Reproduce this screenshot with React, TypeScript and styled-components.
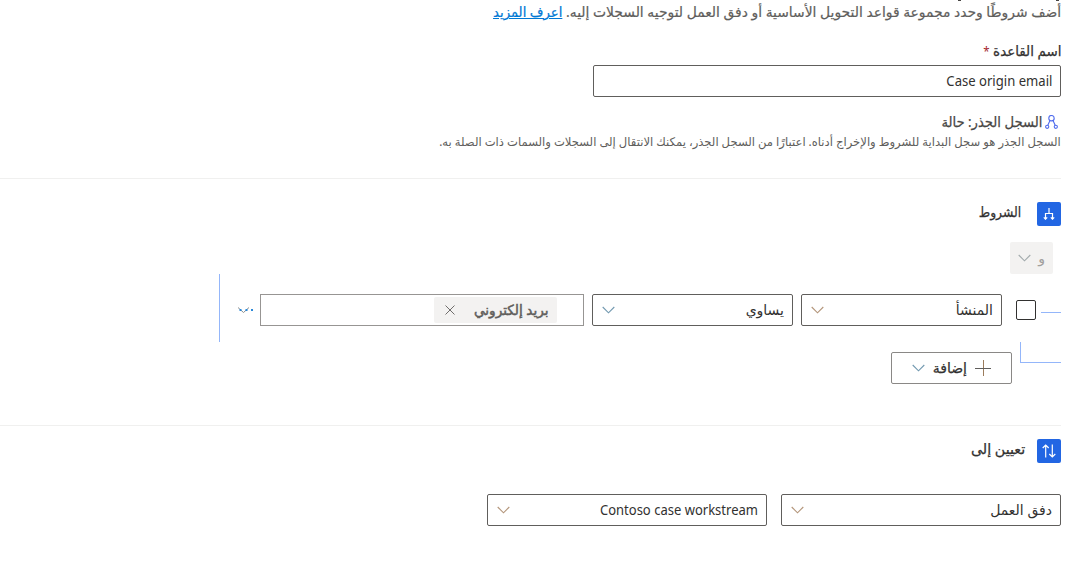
import React from 'react';
import styled, { createGlobalStyle } from 'styled-components';

const Global = createGlobalStyle`
  * { box-sizing: border-box; }
  body { margin: 0; background: #fff; overflow: hidden; }
`;

const Page = styled.main`
  direction: rtl;
  width: 1076px;
  height: 569px;
  overflow: hidden;
  padding-right: 15px;
  display: flex;
  flex-direction: column;
  color: #323130;
  font-family: "Noto Sans", "DejaVu Sans", sans-serif;
  font-size: 14px;
  line-height: 20px;
  white-space: nowrap;
`;

const Fit = styled.span<{ $size?: number; $x?: number; $heavy?: number }>`
  display: inline-block;
  font-size: ${(p) => p.$size ?? 14}px;
  transform: scaleX(${(p) => p.$x ?? 1});
  transform-origin: right center;
  -webkit-text-stroke: ${(p) => p.$heavy ?? 0}px currentColor;
`;

const HeadingTail = styled.svg`
  display: block;
  flex: none;
  margin: 0;
`;

const Intro = styled.p`
  margin: 0;
  height: 20px;
  color: #605e5c;
`;

const Link = styled(Fit)`
  margin-right: -5px;
  color: #0078d4;
  text-decoration: underline;
`;

const Label = styled.label`
  margin-top: 19px;
  height: 24px;
`;

const Star = styled.span`
  color: #a4262c;
  font-size: 12px;
  -webkit-text-stroke: 0;
`;

const Input = styled.div`
  width: 468px;
  height: 32px;
  padding: 0 8px;
  border: 1px solid #605e5c;
  border-radius: 2px;
  line-height: 30px;
`;

const RootTitle = styled.div`
  display: flex;
  align-items: center;
  gap: 3px;
  height: 20px;
  margin-top: 15px;
  padding-right: 3px;
  color: #484644;
`;

const RootNote = styled.p`
  margin: 1px 0 27px;
  height: 18px;
  line-height: 16px;
  color: #605e5c;
`;

const Rule = styled.hr<{ $top?: number }>`
  width: 100%;
  height: 1px;
  margin: ${(p) => p.$top ?? 0}px 0 0;
  border: 0;
  background: #f0f0ef;
`;

const SectionHead = styled.div<{ $top: number; $gap: number }>`
  display: flex;
  align-items: center;
  gap: ${(p) => p.$gap}px;
  height: 24px;
  margin-top: ${(p) => p.$top}px;
`;

const SectionTitle = styled.span`
  padding-bottom: 4px;
`;

const Badge = styled.span`
  display: grid;
  place-items: center;
  width: 24px;
  height: 24px;
  border-radius: 2px;
  background: #2266e3;
`;

const AndButton = styled.button`
  display: flex;
  align-items: center;
  justify-content: space-between;
  width: 43px;
  height: 32px;
  margin: 16px 8px 0 0;
  padding: 0 8px;
  border: 0;
  border-radius: 2px;
  background: #f3f2f1;
  color: #a19f9d;
  font: inherit;
`;

const Row = styled.div`
  display: flex;
  height: 68px;
  align-items: center;
  padding-top: 4px;
`;

const Connector = styled.span`
  width: 20px;
  height: 1px;
  margin: 5px 0 0 5px;
  background: #94b6fa;
`;

const Check = styled.span`
  width: 20px;
  height: 20px;
  margin-left: 14px;
  border: 1px solid #323130;
  border-radius: 2px;
`;

const Select = styled.div<{ $w: number; $gap?: number }>`
  display: flex;
  align-items: center;
  justify-content: space-between;
  width: ${(p) => p.$w}px;
  height: 32px;
  margin-left: ${(p) => p.$gap ?? 0}px;
  padding: 0 8px 0 9px;
  border: 1px solid #605e5c;
  border-radius: 2px;
`;

const TagBox = styled.div`
  display: flex;
  align-items: center;
  width: 324px;
  height: 32px;
  padding-right: 26px;
  border: 1px solid #979593;
`;

const Tag = styled.span`
  display: flex;
  align-items: center;
  justify-content: space-between;
  width: 123px;
  height: 26px;
  padding: 0 8px 0 11px;
  border-radius: 2px;
  background: #f3f2f1;
  color: #605e5c;
`;

const More = styled.span`
  display: flex;
  margin-right: 7px;
`;

const GroupEdge = styled.span`
  width: 1px;
  height: 68px;
  margin: -4px 17px 0 0;
  background: #94b6fa;
`;

const AddRow = styled.div`
  display: flex;
  height: 42px;
`;

const Elbow = styled.span`
  width: 41px;
  height: 21px;
  margin-left: 8px;
  border: solid #94b6fa;
  border-width: 0 0 1px 1px;
`;

const AddButton = styled.button`
  display: flex;
  align-items: center;
  width: 121px;
  height: 32px;
  margin-top: 10px;
  padding: 0 20px;
  border: 1px solid #8a8886;
  border-radius: 2px;
  background: #fff;
  color: #323130;
  font: inherit;
`;

const AddText = styled.span`
  margin: 0 8px 0 auto;
`;

const Targets = styled.div`
  display: flex;
  margin-top: 31px;
`;

const TAN = '#b3957a';
const BLUE = '#7299b0';

const Chevron = ({ color = TAN }: { color?: string }) => (
  <svg width="13" height="8" viewBox="0 0 13 8" fill="none" stroke={color} strokeWidth="1.1">
    <path d="M.7 1 6.5 6.800 12.300 1" />
  </svg>
);

const RootIcon = () => (
  <svg width="13" height="14" viewBox="0 0 13 14" fill="none" stroke="#4f6bed" strokeWidth="1.1">
    <circle cx="6.5" cy="3.200" r="2.700" />
    <circle cx="2.200" cy="11.800" r="1.600" />
    <circle cx="10.800" cy="11.800" r="1.600" />
    <path d="M5 5.500 2.800 10.300M8 5.500l2.200 4.800" />
  </svg>
);

const BranchIcon = () => (
  <svg width="12" height="12" viewBox="0 0 12 12" fill="none" stroke="#fff" strokeWidth="1.2">
    <path d="M6 0v5.500M2.500 11V5.500h7V11M.8 9.300l1.700 1.900 1.700-1.900M7.800 9.300l1.700 1.900 1.700-1.900" />
  </svg>
);

const SwapIcon = () => (
  <svg width="14" height="14" viewBox="0 0 14 14" fill="none" stroke="#fff" strokeWidth="1.2">
    <path d="M3.700 13.500V1M.7 4l3-3 3 3M10.300.5V13M7.300 10l3 3 3-3" />
  </svg>
);

export default function App() {
  return (
    <>
      <Global />
      <Page>
        <HeadingTail width="104" height="2" viewBox="0 0 104 2" fill="none" stroke="#484644">
          <path d="M1 .5h3M99 .5h3" />
        </HeadingTail>
        <Intro>
          <Fit $x={0.99} $heavy={0.2}>
            أضف شروطًا وحدد مجموعة قواعد التحويل الأساسية أو دفق العمل لتوجيه السجلات إليه.
          </Fit>{' '}
          <Link as="a" $x={0.945} $heavy={0.2}>اعرف المزيد</Link>
        </Intro>
        <Label>
          <Fit $x={0.96} $heavy={0.25}>اسم القاعدة <Star>*</Star></Fit>
        </Label>
        <Input><Fit $x={0.935}>Case origin email</Fit></Input>
        <RootTitle>
          <RootIcon />
          <Fit $x={0.94} $heavy={0.25}>السجل الجذر: حالة</Fit>
        </RootTitle>
        <RootNote>
          <Fit $size={12} $x={0.967}>
            السجل الجذر هو سجل البداية للشروط والإخراج أدناه. اعتبارًا من السجل الجذر، يمكنك الانتقال إلى السجلات والسمات ذات الصلة به.
          </Fit>
        </RootNote>
        <Rule />
        <SectionHead $top={23} $gap={16}>
          <Badge><BranchIcon /></Badge>
          <SectionTitle><Fit $x={0.88} $heavy={0.25}>الشروط</Fit></SectionTitle>
        </SectionHead>
        <AndButton><Fit>و</Fit><Chevron color="#a3abad" /></AndButton>
        <Row>
          <Connector />
          <Check />
          <Select $w={201} $gap={8}><Fit>المنشأ</Fit><Chevron /></Select>
          <Select $w={201} $gap={8}><Fit>يساوي</Fit><Chevron color={BLUE} /></Select>
          <TagBox>
            <Tag>
              <Fit $x={0.975} $heavy={0.5}>بريد إلكتروني</Fit>
              <svg width="10" height="10" viewBox="0 0 10 10" stroke="#605e5c" strokeWidth=".9">
                <path d="M.5.5l9 9M9.500.5l-9 9" />
              </svg>
            </Tag>
          </TagBox>
          <More>
            <svg width="16" height="8" viewBox="0 0 16 8" fill="none">
              <path d="M1 1.500 6.500 6.500 12 1.500" stroke="#8b8f90" />
              <path d="M2.500 4h2M8.500 4h2M14 4h2" stroke="#2b88d8" strokeWidth="2" />
            </svg>
          </More>
          <GroupEdge />
        </Row>
        <AddRow>
          <Elbow />
          <AddButton>
            <svg width="16" height="16" viewBox="0 0 16 16">
              <path d="M8.500 0v16" stroke="#9b7c5c" />
              <path d="M0 8.500h16" stroke="#605e5c" />
            </svg>
            <AddText><Fit $heavy={0.25}>إضافة</Fit></AddText>
            <Chevron color={BLUE} />
          </AddButton>
        </AddRow>
        <Rule $top={41} />
        <SectionHead $top={13} $gap={12}>
          <Badge><SwapIcon /></Badge>
          <SectionTitle><Fit $x={1.02} $heavy={0.25}>تعيين إلى</Fit></SectionTitle>
        </SectionHead>
        <Targets>
          <Select $w={280} $gap={14}><Fit>دفق العمل</Fit><Chevron /></Select>
          <Select $w={280}><Fit $x={0.93}>Contoso case workstream</Fit><Chevron /></Select>
        </Targets>
      </Page>
    </>
  );
}
